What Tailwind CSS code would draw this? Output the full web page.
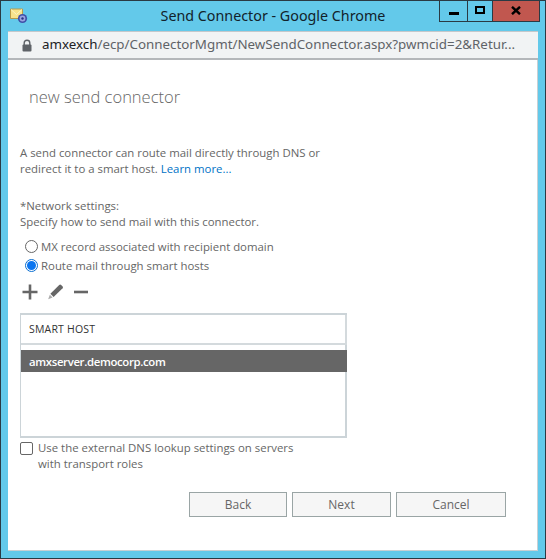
<!DOCTYPE html>
<html lang="en">
<head>
    <meta charset="UTF-8">
    <meta name="viewport" content="width=device-width, initial-scale=1.0">
    <title>Send Connector - Google Chrome</title>
    <script src="https://cdn.jsdelivr.net/npm/@tailwindcss/browser@4"></script>
</head>
<body class="bg-white font-['Open_Sans',sans-serif]">

    <div class="w-[546px] h-[559px] flex flex-col bg-[#63c9ea] border border-[#2a3a44] px-[7px] pb-[7px]">
        <!-- title bar -->
        <div class="h-[30px] shrink-0 flex items-start -mx-[7px] pl-[9px]">
            <svg class="w-[18px] h-[16px] mt-[7px] shrink-0" viewBox="0 0 18 16">
                <path d="M0.5 1 H12.5 V10.5 H0.5 Z" fill="#f7e38c" stroke="#b89b4a" stroke-width="1"/>
                <path d="M1 1.5 L6.5 6.5 L12 1.5" fill="none" stroke="#fdf5c4" stroke-width="1"/>
                <circle cx="12.5" cy="10.5" r="4.6" fill="#3f4fa8"/>
                <circle cx="12.5" cy="10.5" r="2.9" fill="#9aa5e0"/>
                <circle cx="12.5" cy="10.5" r="1.2" fill="#27337f"/>
            </svg>
            <div class="flex-1 text-center text-[14.3px] leading-[30px] text-[#12222b] font-['Noto_Sans',sans-serif] pl-[79px]">Send Connector - Google Chrome</div>
            <div class="flex h-[21px] w-[101px] mr-[5px] border border-t-0 border-[#2a3a44] shrink-0">
                <div class="w-[28px] border-r border-[#2a3a44] flex items-center justify-center pt-[5px]"><div class="w-[10px] h-[3px] bg-black"></div></div>
                <div class="w-[25px] border-r border-[#2a3a44] flex items-center justify-center pb-[2px]"><div class="w-[10px] h-[8px] border-2 border-black"></div></div>
                <div class="flex-1 bg-[#c1574f] flex items-center justify-center pb-[2px]">
                    <svg class="w-[10px] h-[9px]" viewBox="0 0 10 9"><path d="M1 0.8 L9 8.2 M9 0.8 L1 8.2" stroke="#000" stroke-width="2.4"/></svg>
                </div>
            </div>
        </div>

        <!-- address bar -->
        <div class="h-[29px] shrink-0 bg-[#f1f3f4] border-t border-b-2 border-t-[#c4c8cb] border-b-[#b4b7ba] flex items-center pl-[14px] text-[13.35px] text-[#5f6368] font-['Noto_Sans',sans-serif]">
            <svg class="w-[10px] h-[13px] mr-[10px] shrink-0" viewBox="0 0 10 13">
                <path d="M2.2 6 V4 a2.8 2.8 0 0 1 5.6 0 V6" fill="none" stroke="#5f6368" stroke-width="1.4"/>
                <rect x="0.5" y="5.5" width="9" height="7" rx="1" fill="#5f6368"/>
            </svg>
            <div class="flex whitespace-nowrap -mt-px"><span class="text-[#202124]">amxexch</span><span>/ecp/ConnectorMgmt/NewSendConnector.aspx?pwmcid=2&amp;Retur...</span></div>
        </div>

        <!-- page -->
        <div class="flex-1 bg-white border-r border-b border-[#c8d0d4] pl-[12px] text-[11.4px] leading-[16px] text-[#666] min-h-0">
            <h1 class="pl-[9px] pt-[25px] text-[16.5px] leading-[24px] font-light">new send connector</h1>

            <div class="mt-[36px] w-[320px]">
                <p>A send connector can route mail directly through DNS or</p>
                <div class="flex gap-[3px]"><span>redirect it to a smart host.</span><a class="text-[#0072c6]">Learn more...</a></div>
            </div>

            <p class="mt-[21px]">*Network settings:</p>
            <p>Specify how to send mail with this connector.</p>

            <label class="flex items-center mt-[7px] pl-[5px] h-[19px]">
                <span class="w-[13px] h-[13px] rounded-full border border-[#666] bg-white mr-[3px]"></span>
                <span>MX record associated with recipient domain</span>
            </label>
            <label class="flex items-center pl-[5px] h-[19px]">
                <span class="w-[13px] h-[13px] rounded-full border border-[#0a6ed1] bg-white mr-[3px] flex items-center justify-center"><span class="w-[9px] h-[9px] rounded-full bg-[#0a75f0]"></span></span>
                <span>Route mail through smart hosts</span>
            </label>

            <!-- toolbar -->
            <div class="flex items-center h-[20px] mt-[7px] pl-[2px]">
                <svg class="w-[16px] h-[16px]" viewBox="0 0 16 16"><path d="M8 0.5 V15.5 M0.5 8 H15.5" stroke="#666" stroke-width="2.6"/></svg>
                <svg class="w-[17px] h-[16px] ml-[9px]" viewBox="0 0 17 16">
                    <path d="M12.2 1 Q13.2 0.2 14.2 1 L15.6 2.4 Q16.4 3.4 15.6 4.2 L6.6 13 L3.4 9.8 Z" fill="#666"/>
                    <path d="M2.8 10.8 L5.6 13.6 L1.2 15.2 Z" fill="#aaa"/>
                </svg>
                <svg class="w-[14px] h-[16px] ml-[10px]" viewBox="0 0 14 16"><path d="M0 8 H14" stroke="#666" stroke-width="2.6"/></svg>
            </div>

            <!-- smart host list -->
            <div class="mt-[11px] w-[327px] h-[125px] border-2 border-l border-[#ccd4d8]">
                <div class="h-[30px] border-b-2 border-r-2 border-[#d4dadd] -mr-[2px] pl-[8px] flex items-center text-[10.5px] text-[#333] tracking-[0.2px]">SMART HOST</div>
                <div class="h-[22px] mt-[5px] -mr-[2px] bg-[#666] pl-[8px] pt-px flex items-center text-white font-semibold tracking-[-0.35px]">amxserver.democorp.com</div>
            </div>

            <label class="flex items-start mt-[3px]">
                <span class="w-[13px] h-[13px] rounded-[2px] border border-[#666] bg-white mt-[1px] mr-[5px] shrink-0"></span>
                <span class="w-[270px] mt-[-1px]">Use the external DNS lookup settings on servers with transport roles</span>
            </label>

            <!-- buttons -->
            <div class="flex gap-[5px] mt-[20px] pl-[169px] text-[12px]">
                <button class="w-[98px] h-[25px] bg-[#f6f6f6] border border-[#9aa5a5]">Back</button>
                <button class="w-[99px] h-[25px] bg-[#f6f6f6] border border-[#9aa5a5]">Next</button>
                <button class="w-[110px] h-[25px] bg-[#f6f6f6] border border-[#9aa5a5]">Cancel</button>
            </div>
        </div>
    </div>

</body>
</html>
